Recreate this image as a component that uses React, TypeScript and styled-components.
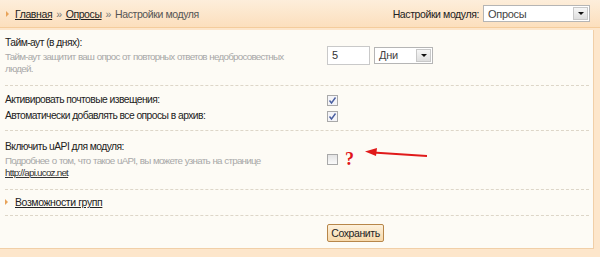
import React from 'react'
import styled, { createGlobalStyle } from 'styled-components'

const GlobalStyle = createGlobalStyle`
  html, body {
    margin: 0;
    padding: 0;
  }
  body {
    font-family: 'Liberation Sans', Arial, sans-serif;
    background: #fde6cb;
  }
`

const Page = styled.div`
  width: 600px;
  height: 257px;
  overflow: hidden;
  background: #fde6cb;
  font-family: 'Liberation Sans', Arial, sans-serif;
  color: #222;
`

const Header = styled.div`
  height: 28px;
  box-sizing: border-box;
  display: flex;
  align-items: center;
  justify-content: space-between;
  padding: 0 10px 0 6px;
  background: linear-gradient(#fdeedb, #fcdfbd);
  border-bottom: 1px solid #f4cc9c;
`

const Crumbs = styled.div`
  display: flex;
  align-items: center;
  gap: 4px;
  font-size: 10.5px;
  letter-spacing: -0.4px;
  color: #555;
`

const Bullet = styled.span`
  width: 0;
  height: 0;
  border-top: 3px solid transparent;
  border-bottom: 3px solid transparent;
  border-left: 3px solid #e8a35a;
  margin-right: 2px;
`

const Link = styled.a`
  color: #222;
  text-decoration: underline;
  cursor: pointer;
`

const Sep = styled.span`
  color: #777;
`

const ModuleSwitch = styled.div`
  display: flex;
  align-items: center;
  gap: 4px;
  font-size: 10.5px;
  letter-spacing: -0.4px;
  color: #222;
`

const Select = styled.div<{ $w: number }>`
  width: ${(p) => p.$w}px;
  height: 17px;
  box-sizing: border-box;
  border: 1px solid #b5b5b5;
  background: #fff;
  display: flex;
  align-items: center;
  justify-content: space-between;
  font-size: 11px;
  letter-spacing: -0.3px;
  color: #444;
  padding-left: 4px;
`

const Arrow = styled.span`
  width: 15px;
  height: 13px;
  margin-right: 1px;
  box-sizing: border-box;
  border: 1px solid #c8c8c8;
  background: linear-gradient(#f6f6f6, #dedede);
  display: flex;
  align-items: center;
  justify-content: center;
  &::after {
    content: '';
    border-left: 3px solid transparent;
    border-right: 3px solid transparent;
    border-top: 3px solid #111;
  }
`

const Panel = styled.div`
  margin: 2px 6px 0 0;
  height: 219px;
  box-sizing: border-box;
  background: #fdfbf5;
  border-right: 1px solid #f1cfa7;
  border-bottom: 1px solid #f1cfa7;
  padding: 0 4px 0 5px;
`

const Section = styled.div<{ $pad?: string }>`
  display: grid;
  grid-template-columns: 322px 1fr;
  align-items: center;
  padding: ${(p) => p.$pad || '6px 0'};
  border-bottom: 1px dashed #ddd6c8;
`

const Label = styled.div`
  font-size: 10.3px;
  letter-spacing: -0.55px;
  color: #222;
  line-height: 16px;
`

const Hint = styled.div`
  font-size: 9.8px;
  letter-spacing: -0.75px;
  word-spacing: 0.6px;
  color: #a8a8a8;
  line-height: 12px;
`

const HintLink = styled.a`
  color: #333;
  text-decoration: underline;
`

const Controls = styled.div`
  display: flex;
  align-items: center;
  gap: 4px;
`

const Input = styled.div`
  width: 43px;
  height: 19px;
  box-sizing: border-box;
  border: 1px solid #c9c9c9;
  background: #fff;
  font-size: 11px;
  color: #333;
  padding: 2px 4px;
`

const Box = styled.span<{ $checked?: boolean }>`
  width: 11px;
  height: 11px;
  box-sizing: border-box;
  border: 1px solid #a9a9a9;
  background: ${(p) => (p.$checked ? '#f4f4f8' : 'linear-gradient(#e4e4e4, #fafafa)')};
  display: inline-flex;
  align-items: center;
  justify-content: center;
`

const Question = styled.span`
  color: #e0141a;
  font-family: 'Liberation Serif', serif;
  font-weight: bold;
  font-size: 18px;
  margin-left: 3px;
`

const Pair = styled.div`
  display: contents;
`

const GroupLink = styled.div`
  display: flex;
  align-items: center;
  gap: 5px;
  font-size: 10.5px;
  letter-spacing: -0.4px;
`

const Footer = styled.div`
  display: grid;
  grid-template-columns: 322px 1fr;
  padding-top: 7px;
`

const Button = styled.button`
  height: 18px;
  width: 57px;
  padding: 0;
  border: 1px solid #b78649;
  border-radius: 2px;
  background: linear-gradient(#fdf1dc, #f7d9ab);
  font-family: 'Liberation Sans', Arial, sans-serif;
  font-size: 10.5px;
  letter-spacing: -0.4px;
  color: #222;
`

const Tick = () => (
  <svg width="9" height="9" viewBox="0 0 9 9">
    <path d="M1.5 4.5 L3.5 7 L7.5 1.5" fill="none" stroke="#4a5fa0" strokeWidth="1.4" />
  </svg>
)

const RedArrow = () => (
  <svg width="62" height="12" viewBox="0 0 62 12" style={{ marginLeft: 7, marginTop: -10 }}>
    <path d="M8 4.5 L62 8" stroke="#e01a1a" strokeWidth="2" />
    <path d="M0 3.5 L12 0 L11 8 Z" fill="#e01a1a" />
  </svg>
)

export default function App() {
  return (
    <Page>
      <GlobalStyle />
      <Header>
        <Crumbs>
          <Bullet />
          <Link>Главная</Link>
          <Sep>»</Sep>
          <Link>Опросы</Link>
          <Sep>»</Sep>
          <span>Настройки модуля</span>
        </Crumbs>
        <ModuleSwitch>
          Настройки модуля:
          <Select $w={107}>
            Опросы
            <Arrow />
          </Select>
        </ModuleSwitch>
      </Header>
      <Panel>
        <Section $pad="5px 0 10px">
          <div>
            <Label>Тайм-аут (в днях):</Label>
            <Hint>
              Тайм-аут защитит ваш опрос от повторных ответов недобросовестных
              <br />
              людей.
            </Hint>
          </div>
          <Controls>
            <Input>5</Input>
            <Select $w={59}>
              Дни
              <Arrow />
            </Select>
          </Controls>
        </Section>
        <Section $pad="6px 0 6px">
          <Pair>
            <Label>Активировать почтовые извещения:</Label>
            <Controls>
              <Box $checked>
                <Tick />
              </Box>
            </Controls>
          </Pair>
          <Pair>
            <Label>Автоматически добавлять все опросы в архив:</Label>
            <Controls>
              <Box $checked>
                <Tick />
              </Box>
            </Controls>
          </Pair>
        </Section>
        <Section $pad="8px 0 10px">
          <div>
            <Label>Включить uAPI для модуля:</Label>
            <Hint>
              Подробнее о том, что такое uAPI, вы можете узнать на странице
              <br />
              <HintLink>http://api.ucoz.net</HintLink>
            </Hint>
          </div>
          <Controls>
            <Box />
            <Question>?</Question>
            <RedArrow />
          </Controls>
        </Section>
        <Section $pad="6px 0 7px">
          <GroupLink>
            <Bullet />
            <Link>Возможности групп</Link>
          </GroupLink>
        </Section>
        <Footer>
          <span />
          <div>
            <Button>Сохранить</Button>
          </div>
        </Footer>
      </Panel>
    </Page>
  )
}
